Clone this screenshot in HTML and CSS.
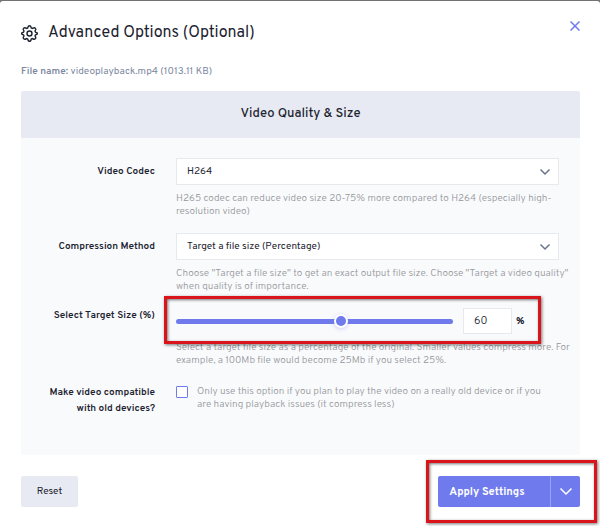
FILE: index.html
```html
<!DOCTYPE html>
<html lang="en">
<head>
<meta charset="utf-8">
<meta name="viewport" content="width=device-width, initial-scale=1">
<title>Advanced Options</title>
<link rel="stylesheet" href="styles.css">
</head>
<body>
<main class="modal">
  <header class="modal-header">
    <svg class="gear" viewBox="0 0 24 24" aria-hidden="true">
      <path d="M10 2.500c.4-1.800 3.600-1.800 4 0l.5 1.700 1.700.7 1.700-.9c1.600-.8 3.400 1.200 2.800 2.800l-.9 1.700.7 1.700 1.200.3c1.800.4 1.800 2.600 0 3l-1.200.4-.7 1.700.9 1.700c.6 1.600-1.200 3.400-2.800 2.800l-1.700-.9-1.700.7-.5 1.600c-.4 1.800-3.600 1.800-4 0l-.5-1.600-1.700-.7-1.700.9c-1.600.6-3.400-1.200-2.800-2.800l.9-1.700-.7-1.700-1.200-.4c-1.800-.4-1.800-2.600 0-3l1.200-.3.7-1.700-.9-1.700c-.6-1.600 1.200-3.600 2.800-2.800l1.700.9 1.700-.7z"/>
      <circle cx="12" cy="12" r="3.500"/>
    </svg>
    <h1>Advanced Options (Optional)</h1>
    <button class="close" type="button" aria-label="Close">
      <svg viewBox="0 0 10 10" aria-hidden="true"><path d="M0.500 0.500L9.500 9.500M9.500 0.500L0.500 9.500"/></svg>
    </button>
  </header>

  <p class="file"><b>File name:</b> videoplayback.mp4 (1013.11 KB)</p>

  <form class="panel" id="options">
    <h2>Video Quality &amp; Size</h2>
    <div class="rows">
      <div class="row">
        <label class="name" for="codec">Video Codec</label>
        <div class="field">
          <div class="select">
            <select id="codec"><option>H264</option></select>
            <svg viewBox="0 0 10 6" aria-hidden="true"><path d="M0.500 0.500L5 5L9.500 0.500"/></svg>
          </div>
          <p class="hint">H265 codec can reduce video size 20-75% more compared to H264 (especially high-<br>resolution video)</p>
        </div>
      </div>
      <div class="row">
        <label class="name" for="method">Compression Method</label>
        <div class="field">
          <div class="select">
            <select id="method"><option>Target a file size (Percentage)</option></select>
            <svg viewBox="0 0 10 6" aria-hidden="true"><path d="M0.500 0.500L5 5L9.500 0.500"/></svg>
          </div>
          <p class="hint">Choose "Target a file size" to get an exact output file size. Choose "Target a video quality"<br>when quality is of importance.</p>
        </div>
      </div>
      <div class="row row-size">
        <label class="name" for="size">Select Target Size (%)</label>
        <div class="field">
          <div class="size">
            <input class="slider" id="size" type="range" min="0" max="100" value="60">
            <input class="number" type="text" value="60" aria-label="Target size">
            <span class="unit">%</span>
          </div>
          <p class="hint">Select a target file size as a percentage of the original. Smaller values compress more. For<br>example, a 100Mb file would become 25Mb if you select 25%.</p>
          <span class="mark mark-size"></span>
        </div>
      </div>
      <div class="row row-compat">
        <label class="name" for="compat">Make video compatible<br>with old devices?</label>
        <div class="field compat">
          <input id="compat" type="checkbox">
          <p class="hint">Only use this option if you plan to play the video on a really old device or if you<br>are having playback issues (it compress less)</p>
        </div>
      </div>
    </div>
  </form>

  <footer class="actions">
    <button class="reset" type="reset" form="options">Reset</button>
    <div class="apply">
      <button class="apply-main" type="submit" form="options">Apply Settings</button>
      <button class="apply-more" type="button" aria-label="More options">
        <svg viewBox="0 0 12 7" aria-hidden="true"><path d="M0.500 0.500L6 6L11.500 0.500"/></svg>
      </button>
      <span class="mark mark-apply"></span>
    </div>
  </footer>
</main>
</body>
</html>
```
FILE: styles.css
```css
:root {
  --accent: #6f7aec;
  --ink: #1c2330;
  --soft: #e7eaf2;
  --line: #e6e9ee;
}

* { box-sizing: border-box; }

body {
  margin: 0;
  padding-top: 1px;
  background: #737173;
  color: var(--ink);
  font-family: Overpass, Roboto, sans-serif;
  font-size: 10px;
}

h1, h2, p { margin: 0; }

button, input, select { font: inherit; color: inherit; }

button { border: 0; padding: 0; cursor: pointer; }

svg { display: block; fill: none; stroke: currentColor; }

.modal {
  min-height: calc(100vh - 1px);
  padding: 16px 20px 18px 21px;
  border-radius: 3px 3px 0 0;
  background: #fff;
}

.modal-header {
  display: flex;
  align-items: center;
  height: 32px;
}

.gear {
  width: 17px;
  height: 17px;
  margin-right: 10px;
  stroke-width: 2;
}

h1 {
  font-size: 16px;
  line-height: 24px;
  font-weight: 400;
}

.close {
  align-self: flex-start;
  margin-left: auto;
  padding: 4px 0 4px 4px;
  background: none;
  color: var(--accent);
}

.close svg { width: 10px; height: 10px; stroke-width: 1.5; }

.file {
  margin: 15px 0 11px;
  color: #7d889f;
  line-height: 16px;
}

.file b { font-weight: 600; }

.panel {
  border-radius: 2px;
  background: #f9fafc;
  overflow: hidden;
}

h2 {
  background: var(--soft);
  font-size: 13px;
  line-height: 47px;
  font-weight: 500;
  text-align: center;
}

.rows {
  display: grid;
  gap: 16px;
  padding: 20px 21px 38px 0;
}

.row {
  display: grid;
  grid-template-columns: 134px minmax(0, 1fr);
  column-gap: 21px;
}

.name {
  padding-top: 6px;
  font-weight: 600;
  line-height: 16px;
  text-align: right;
}

.row-size .name, .row-compat .name { padding-top: 0; }

.row-compat { margin-top: 3px; }

.field { position: relative; }

.select { display: grid; align-items: center; }

.select > * { grid-area: 1 / 1; }

.select select {
  width: 100%;
  height: 27px;
  padding: 0 10px;
  border: 1px solid var(--line);
  border-radius: 0;
  background: #fff;
  appearance: none;
}

.select svg {
  justify-self: end;
  width: 10px;
  height: 6px;
  margin-right: 9px;
  color: #69738c;
  stroke-width: 1.5;
  pointer-events: none;
  overflow: visible;
}

.hint {
  padding-top: 7px;
  color: #94969b;
  font-weight: 300;
  line-height: 13px;
  white-space: nowrap;
}

.row .hint { margin-bottom: -1px; }

.size {
  display: flex;
  align-items: center;
  height: 26px;
}

.slider {
  flex: 1;
  min-width: 0;
  height: 14px;
  margin: 0 10px 0 0;
  appearance: none;
  background: none;
}

.slider::-webkit-slider-runnable-track {
  height: 5px;
  border-radius: 3px;
  background: var(--accent);
}

.slider::-webkit-slider-thumb {
  width: 14px;
  height: 14px;
  margin-top: -5px;
  appearance: none;
  border: 2px solid #fff;
  border-radius: 50%;
  background: var(--accent);
  box-shadow: 0 1px 4px #6f7aec55;
}

.number {
  width: 49px;
  height: 26px;
  padding: 0 10px;
  border: 1px solid var(--line);
  background: #fff;
  font-size: 11px;
  font-weight: 300;
}

.unit { width: 47px; padding-left: 4px; font-weight: 700; }

.mark {
  position: absolute;
  border: 3px solid #d9141a;
  box-shadow: 1px 1px 3px #0008, inset 1px 1px 3px #0008;
  pointer-events: none;
}

.mark-size { inset: -12px 18px 22px -12px; }

.compat {
  display: flex;
  align-items: flex-start;
  gap: 9px;
}

.compat input {
  flex: none;
  width: 12px;
  height: 12px;
  margin: 1px 0 0;
  appearance: none;
  border: 1px solid var(--accent);
  border-radius: 1px;
  background: #fff;
}

.compat .hint { padding-top: 0; }

.actions {
  display: flex;
  justify-content: space-between;
  margin-top: 21px;
}

.reset {
  width: 57px;
  height: 31px;
  border-radius: 2px;
  background: var(--soft);
}

.apply {
  position: relative;
  display: flex;
  height: 31px;
  color: #fff;
  font-size: 11px;
}

.apply button { background: var(--accent); }

.apply .apply-main {
  width: 112px;
  padding-right: 14px;
  border-radius: 2px 0 0 2px;
  font-weight: 700;
}

.apply .apply-more {
  display: grid;
  place-items: center;
  width: 30px;
  border-left: 1px solid #9aa2f3;
  border-radius: 0 2px 2px 0;
}

.apply-more svg {
  width: 12px;
  height: 7px;
  stroke-width: 1.5;
  overflow: visible;
}

.mark-apply { inset: -16px -17px -16px -12px; }
```
